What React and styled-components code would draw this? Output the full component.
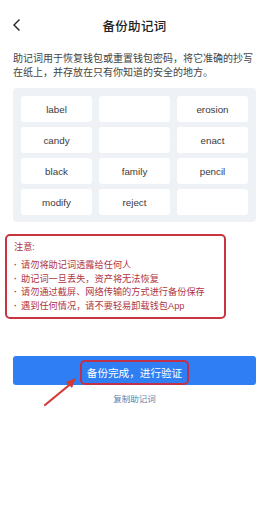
import React from "react";
import styled, { createGlobalStyle } from "styled-components";

const GlobalStyle = createGlobalStyle`
  html, body {
    margin: 0;
    padding: 0;
    background: #fff;
  }
  body {
    font-family: "Liberation Sans", "Noto Sans CJK SC", sans-serif;
    color: #333;
  }
`;

const Page = styled.div`
  width: 269px;
  height: 522px;
  position: relative;
  background: #fff;
  overflow: hidden;
`;

const Header = styled.div`
  height: 50px;
  display: flex;
  align-items: center;
  justify-content: center;
  position: relative;
`;

const Back = styled.div`
  position: absolute;
  left: 12px;
  top: 18px;
  width: 10px;
  height: 14px;
  display: flex;
`;

const Title = styled.div`
  font-size: 12.5px;
  font-weight: 500;
  color: #222;
  letter-spacing: 0.3px;
`;

const Intro = styled.p`
  margin: 2px 13px 0 13px;
  font-size: 10px;
  line-height: 13.5px;
  color: #444;
`;

const WordCard = styled.div`
  margin: 9px 13px 0 13px;
  background: #eef1f6;
  border-radius: 4px;
  padding: 8px 8px 7px 8px;
  display: grid;
  grid-template-columns: repeat(3, 1fr);
  column-gap: 7px;
  row-gap: 5px;
`;

const Word = styled.div`
  height: 26px;
  background: #fff;
  border-radius: 3px;
  display: flex;
  align-items: center;
  justify-content: center;
  font-size: 9.8px;
  color: #3a3a3a;
`;

const Notice = styled.div`
  margin: 12px 0 0 5px;
  width: 221px;
  box-sizing: border-box;
  border: 2px solid #c8353f;
  border-radius: 5px;
  padding: 5px 0 4px 7px;
  color: #b0353f;
  font-size: 9.2px;
`;

const NoticeTitle = styled.div`
  line-height: 13px;
  margin-bottom: 5px;
`;

const NoticeLine = styled.div`
  line-height: 13.5px;
  &::before {
    content: "·";
    margin-right: 4px;
    font-weight: bold;
  }
`;

const Actions = styled.div`
  margin: 37px 13px 0 13px;
  display: flex;
  flex-direction: column;
  align-items: center;
  position: relative;
`;

const MainButton = styled.div`
  width: 100%;
  height: 29px;
  background: #2f7ef4;
  border-radius: 3px;
  display: flex;
  align-items: center;
  justify-content: center;
`;

const ButtonLabel = styled.div`
  border: 2px solid #c0304a;
  border-radius: 5px;
  height: 21px;
  padding: 0 5px;
  display: flex;
  align-items: center;
  margin-top: 3px;
  color: #fff;
  font-size: 10.6px;
`;

const CopyLink = styled.div`
  margin-top: 7px;
  font-size: 8.5px;
  color: #5b7fae;
`;

const Arrow = styled.svg`
  position: absolute;
  left: 30px;
  top: 18px;
`;

const words = [
  "label", "", "erosion",
  "candy", "", "enact",
  "black", "family", "pencil",
  "modify", "reject", "",
];

const notes = [
  "请勿将助记词透露给任何人",
  "助记词一旦丢失，资产将无法恢复",
  "请勿通过截屏、网络传输的方式进行备份保存",
  "遇到任何情况，请不要轻易卸载钱包App",
];

export default function App() {
  return (
    <Page>
      <GlobalStyle />
      <Header>
        <Back>
          <svg width="10" height="14" viewBox="0 0 10 14">
            <path d="M7.5 1.5 L2 7 L7.5 12.5" fill="none" stroke="#222" strokeWidth="1.4" />
          </svg>
        </Back>
        <Title>备份助记词</Title>
      </Header>
      <Intro>助记词用于恢复钱包或重置钱包密码，将它准确的抄写在纸上，并存放在只有你知道的安全的地方。</Intro>
      <WordCard>
        {words.map((w, i) => (
          <Word key={i}>{w}</Word>
        ))}
      </WordCard>
      <Notice>
        <NoticeTitle>注意:</NoticeTitle>
        {notes.map((n) => (
          <NoticeLine key={n}>{n}</NoticeLine>
        ))}
      </Notice>
      <Actions>
        <MainButton>
          <ButtonLabel>备份完成，进行验证</ButtonLabel>
        </MainButton>
        <CopyLink>复制助记词</CopyLink>
        <Arrow width="40" height="34" viewBox="0 0 40 34">
          <path d="M2 31 L30 8" stroke="#d23a33" strokeWidth="2.2" strokeLinecap="round" />
          <path d="M33 4 L23 8 L29 14 Z" fill="#d23a33" />
        </Arrow>
      </Actions>
    </Page>
  );
}
